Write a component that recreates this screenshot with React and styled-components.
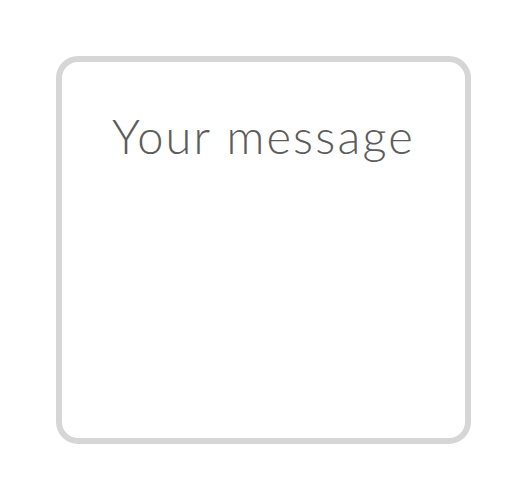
import styled, { createGlobalStyle } from "styled-components";

const GlobalStyle = createGlobalStyle`
  body {
    margin: 0;
    background: #ffffff;
    font-family: Lato, "Open Sans", sans-serif;
  }
`;

const Page = styled.div`
  padding: 56px 0 0 56px;
`;

const MessageField = styled.textarea`
  display: block;
  box-sizing: border-box;
  width: 415px;
  height: 388px;
  padding: 44px 16px;
  border: 6px solid #d6d6d6;
  border-radius: 22px;
  background: #ffffff;
  font-family: Lato, "Open Sans", sans-serif;
  font-size: 47px;
  font-weight: 300;
  letter-spacing: 2.2px;
  line-height: 60px;
  color: #555555;
  text-align: center;
  resize: none;
  outline: none;

  &::placeholder {
    color: #5c5c5c;
    opacity: 1;
  }
`;

function App() {
  return (
    <>
      <GlobalStyle />
      <Page>
        <MessageField placeholder="Your message" />
      </Page>
    </>
  );
}

export default App;
